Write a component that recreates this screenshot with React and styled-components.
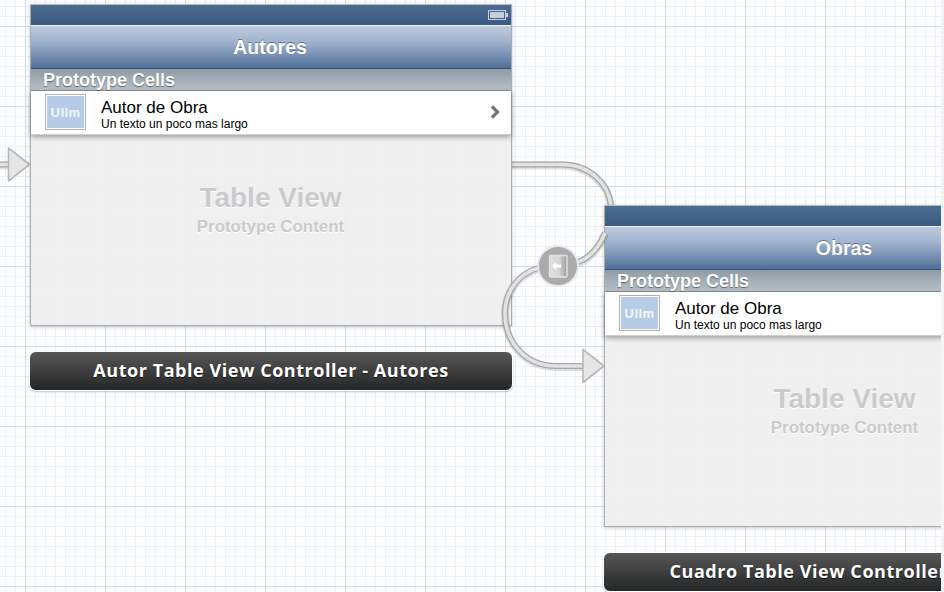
import React from "react";
import styled, { createGlobalStyle } from "styled-components";

const Global = createGlobalStyle`
  html, body { margin: 0; padding: 0; width: 944px; height: 592px; overflow: hidden; background: #fff; }
`;

const Page = styled.div`
  display: flex;
  width: 944px;
  height: 592px;
  background: #f4f4f5;
`;

const Canvas = styled.div`
  position: relative;
  width: 941px;
  height: 592px;
  overflow: hidden;
  background-color: #fff;
  background-image:
    linear-gradient(to right, #cbdcf7 1px, transparent 1px),
    linear-gradient(to bottom, #cbdcf7 1px, transparent 1px),
    linear-gradient(to right, #e8f0fc 1px, transparent 1px),
    linear-gradient(to bottom, #e8f0fc 1px, transparent 1px);
  background-size: 80px 80px, 80px 80px, 10px 10px, 10px 10px;
  background-position: 25px 26px, 25px 26px, 5px 6px, 5px 6px;
`;

const Scene = styled.section`
  position: absolute;
  left: ${(p) => p.$x}px;
  top: ${(p) => p.$y}px;
  width: 482px;
  display: flex;
  flex-direction: column;
  gap: 25px;
  font-family: "Liberation Sans", Arial, sans-serif;
`;

const Frame = styled.div`
  box-sizing: border-box;
  width: 482px;
  height: 322px;
  display: flex;
  flex-direction: column;
  border: 1px solid #a9adb3;
  border-top-color: #b9bcc0;
  background: rgba(238, 238, 239, 0.9);
  box-shadow: 0 1px 4px rgba(0, 0, 0, 0.22);
`;

const StatusBar = styled.div`
  height: 20px;
  flex: none;
  display: flex;
  align-items: center;
  justify-content: flex-end;
  padding-right: 3px;
  background: linear-gradient(#4c6c91, #3a5a82);
`;

const NavBar = styled.div`
  box-sizing: border-box;
  height: 44px;
  flex: none;
  display: flex;
  align-items: center;
  justify-content: center;
  padding-right: 2px;
  border-top: 1px solid #f2f5f9;
  border-bottom: 1px solid #35527a;
  background: linear-gradient(#bccadd, #a3b5cf 35%, #516f99);
  color: #fff;
  font-size: 19.5px;
  font-weight: 700;
  text-shadow: 0 -1px 0 rgba(40, 60, 90, 0.55);
`;

const SectionHeader = styled.div`
  box-sizing: border-box;
  height: 22px;
  flex: none;
  display: flex;
  align-items: center;
  padding: 2px 0 0 12px;
  border-bottom: 1px solid #8b9298;
  background: linear-gradient(#8f9ca5, #b7c0c6);
  color: #fff;
  font-size: 18px;
  font-weight: 700;
  text-shadow: 0 1px 1px rgba(60, 70, 80, 0.7);
`;

const Row = styled.div`
  box-sizing: border-box;
  height: 44px;
  flex: none;
  display: flex;
  align-items: center;
  padding: 0 10px 1px 14px;
  background: #fff;
  border-bottom: 1px solid #d0d0d0;
  box-shadow: 0 2px 5px rgba(0, 0, 0, 0.35);
  position: relative;
`;

const Thumb = styled.div`
  box-sizing: border-box;
  width: 41px;
  height: 36px;
  flex: none;
  display: flex;
  align-items: center;
  justify-content: center;
  background: #b5cbe6;
  border: 1px solid #b2b2b2;
  outline: 1px solid #fff;
  outline-offset: -2px;
  color: #f4f7fb;
  font-size: 13px;
  font-weight: 700;
  letter-spacing: 0.4px;
`;

const RowText = styled.div`
  flex: 1;
  display: flex;
  flex-direction: column;
  margin-left: 15px;
  padding-top: 4px;
  color: #000;
`;

const RowTitle = styled.span`
  font-size: 17px;
  line-height: 19px;
`;

const RowSubtitle = styled.span`
  font-size: 12px;
  line-height: 14px;
`;

const Placeholder = styled.div`
  flex: 1;
  display: flex;
  flex-direction: column;
  align-items: center;
  padding-top: 47px;
  padding-right: 1px;
  color: #cbcbcd;
  font-weight: 700;
  text-shadow: 0 1px 0 #fff;
`;

const PlaceholderTitle = styled.span`
  font-size: 28px;
  line-height: 32px;
`;

const PlaceholderSub = styled.span`
  font-size: 16.9px;
  line-height: 20px;
  margin-top: 3px;
`;

const Label = styled.div`
  box-sizing: border-box;
  width: 484px;
  height: 40px;
  margin-left: -1px;
  padding-bottom: 2px;
  display: flex;
  align-items: center;
  justify-content: center;
  white-space: nowrap;
  border: 1px solid #fff;
  border-radius: 7px;
  box-shadow: 0 1px 2px rgba(0, 0, 0, 0.25);
  background: linear-gradient(rgba(80, 80, 80, 0.96), rgba(28, 29, 30, 0.96));
  color: #fff;
  font-family: "Open Sans", sans-serif;
  font-size: 18px;
  font-weight: 700;
  letter-spacing: 0.55px;
  text-shadow: 0 1px 1px rgba(0, 0, 0, 0.6);
`;

const Overlay = styled.svg`
  position: absolute;
  left: 0;
  top: 0;
`;

function Battery() {
  return (
    <svg width="20" height="11" viewBox="0 0 20 11">
      <rect x="0.5" y="0.5" width="17" height="9" fill="none" stroke="#c3d0e0" />
      <rect x="2" y="2" width="14" height="6" fill="#c3cfdd" />
      <rect x="18" y="3" width="2" height="4" fill="#c3d0e0" />
    </svg>
  );
}

function Chevron() {
  return (
    <svg width="12" height="16" viewBox="0 0 12 16">
      <path d="M3 2.5 L8.5 8 L3 13.5" fill="none" stroke="#757575" strokeWidth="3.2" />
    </svg>
  );
}

function ControllerScene({ x, y, title, label, battery, chevron }) {
  return (
    <Scene $x={x} $y={y}>
      <Frame>
        <StatusBar>{battery && <Battery />}</StatusBar>
        <NavBar>{title}</NavBar>
        <SectionHeader>Prototype Cells</SectionHeader>
        <Row>
          <Thumb>UIIm</Thumb>
          <RowText>
            <RowTitle>Autor de Obra</RowTitle>
            <RowSubtitle>Un texto un poco mas largo</RowSubtitle>
          </RowText>
          {chevron && <Chevron />}
        </Row>
        <Placeholder>
          <PlaceholderTitle>Table View</PlaceholderTitle>
          <PlaceholderSub>Prototype Content</PlaceholderSub>
        </Placeholder>
      </Frame>
      <Label>{label}</Label>
    </Scene>
  );
}

function Tube({ d }) {
  return (
    <g fill="none">
      <path d={d} stroke="rgba(0,0,0,0.13)" strokeWidth="8" transform="translate(0,1)" />
      <path d={d} stroke="#a6a6a6" strokeWidth="6" />
      <path d={d} stroke="#e2e2e2" strokeWidth="3.6" />
    </g>
  );
}

function ArrowHead({ x, y }) {
  return (
    <path
      d={`M${x} ${y - 16.5} L${x + 21} ${y} L${x} ${y + 16.5} Z`}
      fill="#e6e6e6"
      stroke="#b8b8b8"
      strokeWidth="1.6"
      strokeLinejoin="round"
    />
  );
}

function BackSegues() {
  return (
    <Overlay width="941" height="592" viewBox="0 0 941 592">
      <Tube d="M511 164.5 H562 C590 164.5 609 184 611 206" />
      <Tube d="M-2 164.5 H10" />
      <ArrowHead x={8.5} y={164.5} />
    </Overlay>
  );
}

function FrontSegues() {
  return (
    <Overlay width="941" height="592" viewBox="0 0 941 592">
      <defs>
        <linearGradient id="door" x1="0" x2="1" y1="0" y2="0">
          <stop offset="0" stopColor="#dedede" />
          <stop offset="0.55" stopColor="#d6d6d6" />
          <stop offset="1" stopColor="#9c9c9c" />
        </linearGradient>
      </defs>
      <Tube d="M605 233 C599 247 590 258 578 262" />
      <Tube d="M538 268 C518 274 505 292 505 313 C505 343 526 366 556 366 H584" />
      <ArrowHead x={583} y={366} />
      <circle cx="558" cy="266" r="20" fill="#ababab" stroke="#e9e9e9" strokeWidth="2" />
      <rect x="549.5" y="255.5" width="17.5" height="21.5" rx="1" fill="url(#door)" stroke="#e2e2e2" strokeWidth="1.4" />
      <path d="M552 266 L556 262 V264.5 H561 V267.5 H556 V270 Z" fill="#fff" />
    </Overlay>
  );
}

export default function App() {
  return (
    <Page>
      <Global />
      <Canvas>
        <BackSegues />
        <ControllerScene x={30} y={4} title="Autores" label="Autor Table View Controller - Autores" battery chevron />
        <ControllerScene x={604} y={205} title="Obras" label="Cuadro Table View Controller - Obras" />
        <FrontSegues />
      </Canvas>
    </Page>
  );
}
